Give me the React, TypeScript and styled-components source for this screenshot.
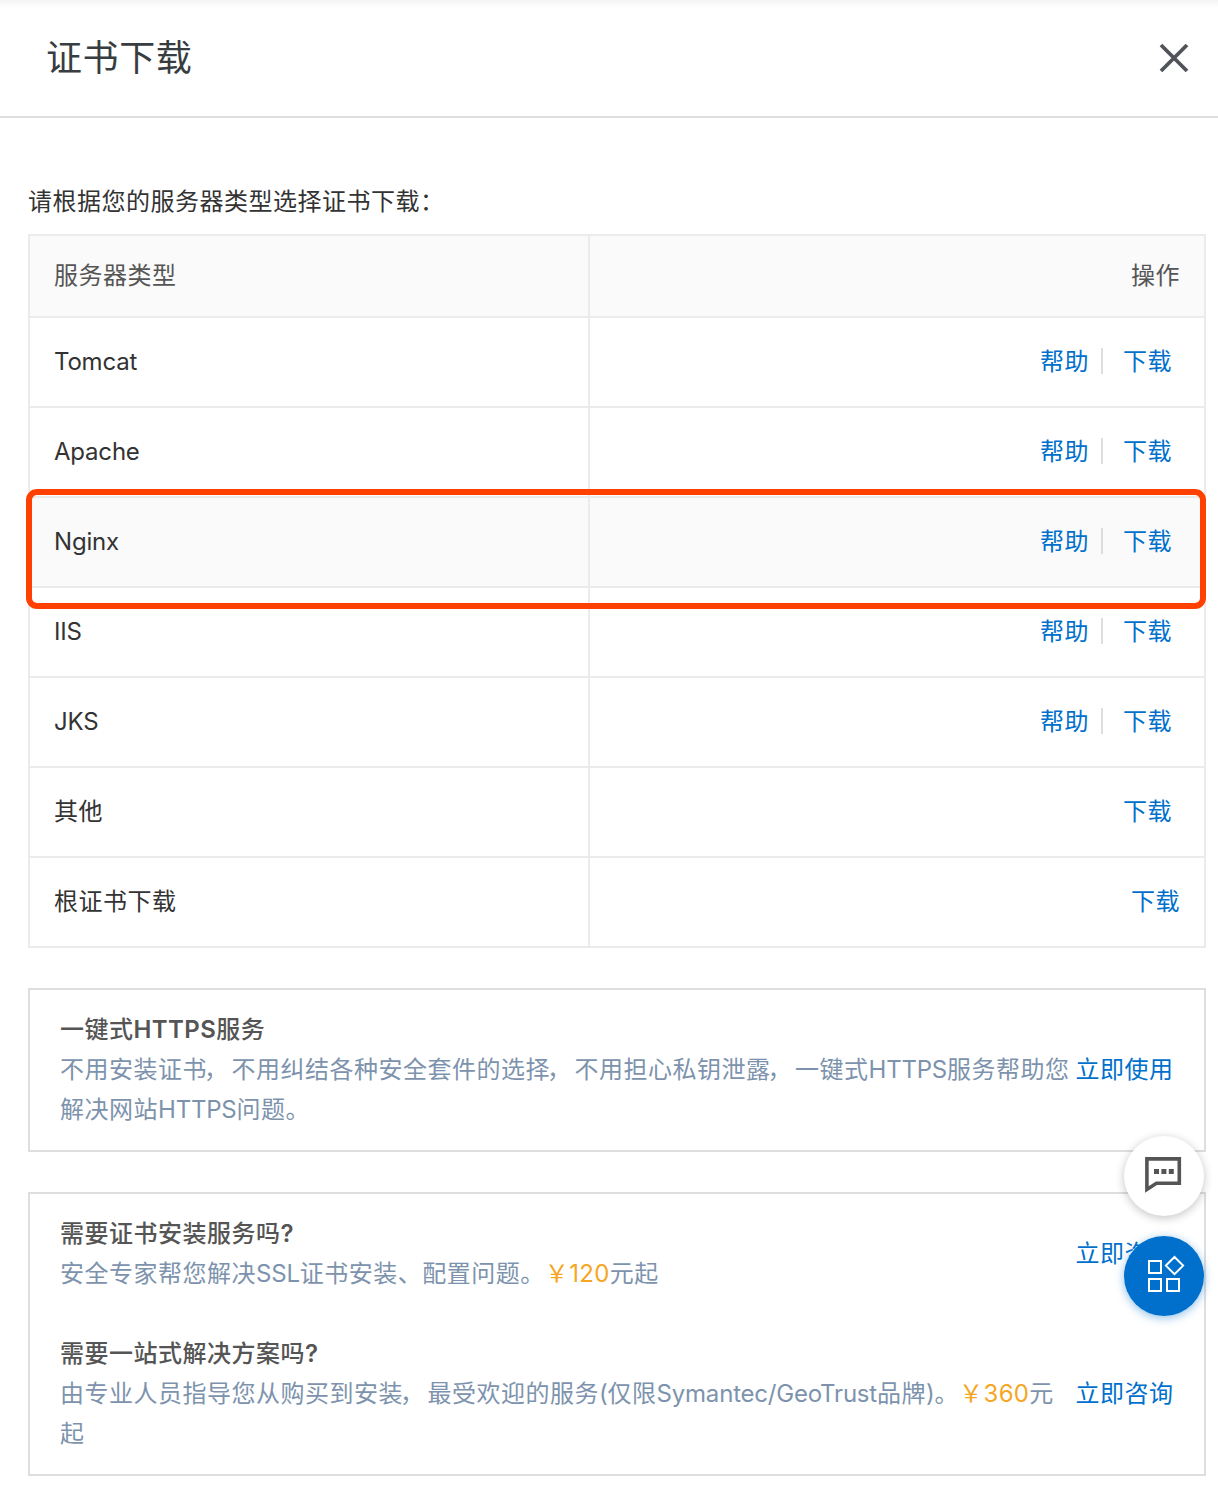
import React from "react";
import styled, { createGlobalStyle, css } from "styled-components";

const GlobalStyle = createGlobalStyle`
  *, *::before, *::after { box-sizing: border-box; }
  html, body { margin: 0; padding: 0; background: #fff; }
  body {
    font-family: "Noto Sans CJK SC", sans-serif;
    font-size: 24px;
    line-height: 40px;
    letter-spacing: 0.5px;
    color: #333;
  }
`;

const Drawer = styled.div`
  position: relative;
  width: 1218px;
  height: 1512px;
  overflow: hidden;
  background: linear-gradient(#f4f4f4, #fff 8px);
`;

const Header = styled.header`
  display: flex;
  align-items: center;
  justify-content: space-between;
  height: 118px;
  padding: 0 28px 0 46px;
  border-bottom: 2px solid #dedede;
`;

const Title = styled.h1`
  margin: 0 0 6px;
  font-size: 36px;
  font-weight: 400;
  line-height: 50px;
  letter-spacing: 0.6px;
  color: #373d41;
`;

const CloseButton = styled.button`
  display: flex;
  padding: 0;
  border: 0;
  background: none;
`;

const Body = styled.main`
  display: flex;
  flex-direction: column;
  padding: 62px 12px 0 28px;
`;

const Prompt = styled.p`
  margin: 0 0 14px;
  white-space: nowrap;
`;

const Table = styled.div`
  border: 2px solid #ebebeb;
  border-bottom: 0;
`;

const Row = styled.div<{ $head?: boolean; $hovered?: boolean }>`
  position: relative;
  display: grid;
  grid-template-columns: 560px 1fr;
  height: ${(p) => (p.$head ? 82 : 90)}px;
  border-bottom: 2px solid #ebebeb;
  background: ${(p) => (p.$head || p.$hovered ? "#fafafa" : "transparent")};
  color: ${(p) => (p.$head ? "#555" : "#333")};
`;

const Cell = styled.div<{ $end?: boolean }>`
  display: flex;
  align-items: center;
  padding: 0 24px 4px;
  ${(p) =>
    p.$end
      ? css`
          justify-content: flex-end;
        `
      : css`
          border-right: 2px solid #ebebeb;
        `}
`;

const Highlight = styled.div`
  position: absolute;
  z-index: 1;
  top: -9px;
  left: -4px;
  right: -2px;
  height: 120px;
  border: 6px solid #ff4000;
  border-radius: 11px;
  pointer-events: none;
`;

const Latin = styled.span<{ $spacing?: number }>`
  font-family: Inter, sans-serif;
  line-height: 1;
  letter-spacing: ${(p) => p.$spacing ?? -0.2}px;
`;

const Comma = styled.span`
  margin: 0 3px 0 -3px;
`;

const Link = styled.a`
  color: #0070cc;
  text-decoration: none;
  white-space: nowrap;
`;

const Actions = styled.div<{ $inset: boolean }>`
  display: flex;
  align-items: center;
  padding-right: ${(p) => (p.$inset ? 8 : 0)}px;
`;

const Divider = styled.span`
  width: 2px;
  height: 26px;
  margin: 2px 20px 0 12px;
  background: #dedede;
`;

const Card = styled.section`
  display: flex;
  flex-direction: column;
  gap: 40px;
  margin-top: 40px;
  padding: 18px 30.5px 22px 30px;
  border: 2px solid #dedede;
`;

const Offer = styled.div`
  display: flex;
  align-items: center;
  justify-content: space-between;
`;

const OfferText = styled.div`
  width: 1015px;
  white-space: nowrap;
  color: #7d93ad;
`;

const OfferTitle = styled.div`
  font-weight: 500;
  color: #555;

  ${Latin} {
    font-weight: 600;
  }
`;

const Price = styled.span`
  color: #f5a623;
`;

const FloatBar = styled.aside`
  position: absolute;
  top: 1136px;
  right: 14px;
  z-index: 2;
  display: flex;
  flex-direction: column;
  gap: 20px;
`;

const FloatButton = styled.button<{ $primary?: boolean }>`
  display: flex;
  align-items: center;
  justify-content: center;
  width: 80px;
  height: 80px;
  padding: 0;
  border: 0;
  border-radius: 50%;
  background: ${(p) => (p.$primary ? "#0070cc" : "#fff")};
  box-shadow: 0 2px 10px
    ${(p) => (p.$primary ? "rgba(0, 112, 204, 0.45)" : "rgba(0, 0, 0, 0.24)")};
`;

type ServerRow = {
  name: string;
  latin?: boolean;
  help?: boolean;
  inset?: boolean;
  active?: boolean;
};

const rows: ServerRow[] = [
  { name: "Tomcat", latin: true, help: true, inset: true },
  { name: "Apache", latin: true, help: true, inset: true },
  { name: "Nginx", latin: true, help: true, inset: true, active: true },
  { name: "IIS", latin: true, help: true, inset: true },
  { name: "JKS", latin: true, help: true, inset: true },
  { name: "其他", inset: true },
  { name: "根证书下载" },
];

const CloseIcon = () => (
  <svg width="32" height="32" viewBox="0 0 32 32" fill="none" stroke="#50545a" strokeWidth="3.8">
    <path d="M3 3 29 29M29 3 3 29" />
  </svg>
);

const ChatIcon = () => (
  <svg width="80" height="80" viewBox="0 0 80 80">
    <path d="M22.9 22.9H55.3V47.3H32.4L22.9 53.4Z" fill="none" stroke="#555" strokeWidth="3.6" />
    <path d="M30 33h5v5h-5zM37.4 33h5v5h-5zM44.8 33h5v5h-5z" fill="#555" />
  </svg>
);

const AppsIcon = () => (
  <svg width="80" height="80" viewBox="0 0 80 80" fill="none" stroke="#fff" strokeWidth="2">
    <path d="M25 25h12v12H25zM25 43h12v12H25zM43 43h12v12H43zM50.5 21l8.6 8.6-8.6 8.6-8.6-8.6z" />
  </svg>
);

export default function App() {
  return (
    <Drawer lang="zh-CN">
      <GlobalStyle />
      <Header>
        <Title>证书下载</Title>
        <CloseButton aria-label="关闭">
          <CloseIcon />
        </CloseButton>
      </Header>
      <Body>
        <Prompt>请根据您的服务器类型选择证书下载：</Prompt>
        <Table>
          <Row $head>
            <Cell>服务器类型</Cell>
            <Cell $end>操作</Cell>
          </Row>
          {rows.map((row) => (
            <Row key={row.name} $hovered={row.active}>
              <Cell>
                <div>{row.latin ? <Latin>{row.name}</Latin> : row.name}</div>
              </Cell>
              <Cell $end>
                <Actions $inset={!!row.inset}>
                  {row.help && (
                    <>
                      <Link>帮助</Link>
                      <Divider />
                    </>
                  )}
                  <Link>下载</Link>
                </Actions>
              </Cell>
              {row.active && <Highlight />}
            </Row>
          ))}
        </Table>

        <Card>
          <Offer>
            <OfferText>
              <OfferTitle>
                一键式<Latin $spacing={0.4}>HTTPS</Latin>服务
              </OfferTitle>
              不用安装证书<Comma>，</Comma>不用纠结各种安全套件的选择<Comma>，</Comma>
              不用担心私钥泄露<Comma>，</Comma>一键式
              <Latin>HTTPS</Latin>服务帮助您
              <br />
              解决网站<Latin>HTTPS</Latin>问题。
            </OfferText>
            <Link>立即使用</Link>
          </Offer>
        </Card>

        <Card>
          <Offer>
            <OfferText>
              <OfferTitle>
                需要证书安装服务吗<Latin>?</Latin>
              </OfferTitle>
              安全专家帮您解决<Latin>SSL</Latin>证书安装、配置问题。
              <Price>
                ￥<Latin $spacing={0.3}>120</Latin>
              </Price>
              元起
            </OfferText>
            <Link>立即咨询</Link>
          </Offer>
          <Offer>
            <OfferText>
              <OfferTitle>
                需要一站式解决方案吗<Latin>?</Latin>
              </OfferTitle>
              由专业人员指导您从购买到安装<Comma>，</Comma>最受欢迎的服务
              <Latin>(</Latin>仅限
              <Latin>Symantec/GeoTrust</Latin>品牌<Latin>)</Latin>。
              <Price>
                ￥<Latin $spacing={0.3}>360</Latin>
              </Price>
              元
              <br />起
            </OfferText>
            <Link>立即咨询</Link>
          </Offer>
        </Card>
      </Body>
      <FloatBar>
        <FloatButton aria-label="消息">
          <ChatIcon />
        </FloatButton>
        <FloatButton $primary aria-label="应用">
          <AppsIcon />
        </FloatButton>
      </FloatBar>
    </Drawer>
  );
}
